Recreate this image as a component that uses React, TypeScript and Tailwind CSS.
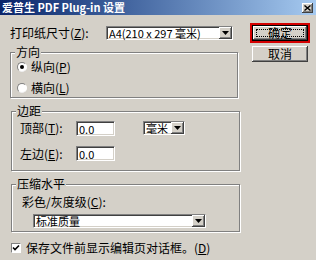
import React from "react";

const font = { fontFamily: '"Noto Sans CJK SC", "Liberation Sans", sans-serif' };

// classic win2k bevels
const sunken =
  "bg-white border border-t-[#808080] border-l-[#808080] border-r-white border-b-white shadow-[inset_1px_1px_0_#404040,inset_-1px_-1px_0_#d4d0c8]";
const raised =
  "bg-[#d4d0c8] shadow-[inset_-1px_-1px_0_#404040,inset_1px_1px_0_#fff,inset_-2px_-2px_0_#808080,inset_2px_2px_0_#d4d0c8]";

function Arrow() {
  return (
    <div className={`w-[13px] h-full flex items-center justify-center ${raised}`}>
      <svg width="7" height="4" viewBox="0 0 7 4">
        <path d="M0 0h7L3.5 4z" fill="#000" />
      </svg>
    </div>
  );
}

function Combo({ text, className }: { text: string; className: string }) {
  return (
    <div className={`flex items-stretch shrink-0 ${sunken} ${className}`}>
      <span className="flex-1 pl-[2px] text-[11px] leading-[12px] flex items-center whitespace-nowrap">{text}</span>
      <Arrow />
    </div>
  );
}

function Group({ label, className, children }: { label: string; className: string; children: React.ReactNode }) {
  return (
    <div className={`relative border border-[#808080] shadow-[1px_1px_0_#fff,inset_1px_1px_0_#fff] ${className}`}>
      <span className="absolute left-[4px] top-[-8px] px-[1px] bg-[#d4d0c8] text-[12px] leading-[14px]">{label}</span>
      {children}
    </div>
  );
}

function Radio({ checked, label, k }: { checked?: boolean; label: string; k: string }) {
  return (
    <div className="flex items-center h-[14px]">
      <div className="w-[10px] h-[10px] rounded-full bg-white border border-t-[#808080] border-l-[#808080] border-r-white border-b-[#eee] ml-[6px] mr-[4px] flex items-center justify-center">
        {checked && <div className="w-[4px] h-[4px] rounded-full bg-black" />}
      </div>
      <span className="text-[12px] leading-[14px]">
        {label}(<u>{k}</u>)
      </span>
    </div>
  );
}

export default function App() {
  return (
    <div className="w-[316px] h-[260px] bg-[#d4d0c8] text-black overflow-hidden flex flex-col" style={font}>
      {/* title bar */}
      <div className="h-[15px] flex items-center bg-gradient-to-r from-[#0a246a] to-[#a6caf0] pl-[2px] pr-[3px]">
        <span className="text-white font-bold text-[11px] leading-[15px]">爱普生 PDF Plug-in 设置</span>
        <div className={`ml-auto w-[11px] h-[10px] flex items-center justify-center ${raised}`}>
          <svg width="7" height="6" viewBox="0 0 7 6">
            <path d="M0.5 0.5l6 5M6.5 0.5l-6 5" stroke="#000" strokeWidth="1.4" />
          </svg>
        </div>
      </div>

      <div className="flex">
        {/* left column */}
        <div className="flex flex-col w-[240px] pl-[10px]">
          <div className="flex items-center mt-[11px] h-[14px]">
            <span className="text-[12px] leading-[14px] w-[96px] shrink-0">
              打印纸尺寸(<u>Z</u>):
            </span>
            <Combo text="A4(210 x 297 毫米)" className="w-[127px] h-[14px]" />
          </div>

          <Group label="方向" className="mt-[12px] w-[228px] h-[46px] pt-[7px] flex flex-col gap-[7px]">
            <Radio checked label="纵向" k="P" />
            <Radio label="横向" k="L" />
          </Group>

          <Group label="边距" className="mt-[13px] ml-[1px] w-[229px] h-[60px] pt-[9px] pl-[8px] flex flex-col gap-[11px]">
            <div className="flex items-center h-[14px]">
              <span className="text-[12px] leading-[14px] w-[56px] shrink-0">
                顶部(<u>T</u>):
              </span>
              <div className={`w-[39px] h-[15px] shrink-0 text-[11px] leading-[12px] pl-[2px] pt-[1px] ${sunken}`}>0.0</div>
              <div className="w-[28px] shrink-0" />
              <Combo text="毫米" className="w-[42px] h-[14px]" />
            </div>
            <div className="flex items-center h-[15px]">
              <span className="text-[12px] leading-[14px] w-[56px] shrink-0">
                左边(<u>E</u>):
              </span>
              <div className={`w-[39px] h-[15px] shrink-0 text-[11px] leading-[12px] pl-[2px] pt-[1px] ${sunken}`}>0.0</div>
            </div>
          </Group>

          <Group label="压缩水平" className="mt-[13px] ml-[1px] w-[229px] h-[48px] pt-[10px] pl-[10px] flex flex-col">
            <span className="text-[12px] leading-[14px]">
              彩色/灰度级(<u>C</u>):
            </span>
            <Combo text="标准质量" className="mt-[5px] ml-[11px] w-[173px] h-[14px]" />
          </Group>

          <div className="flex items-center mt-[9px] h-[14px]">
            <div className="w-[10px] h-[10px] bg-white border border-t-[#808080] border-l-[#808080] border-r-white border-b-white ml-[1px] mr-[5px] flex items-center justify-center">
              <svg width="8" height="8" viewBox="0 0 8 8">
                <path d="M1 3.5l2 2L7 1.5" stroke="#000" strokeWidth="1.6" fill="none" />
              </svg>
            </div>
            <span className="text-[12px] leading-[14px]">
              保存文件前显示编辑页对话框。(<u>D</u>)
            </span>
          </div>
        </div>

        {/* right column: buttons */}
        <div className="flex flex-col ml-[10px] mt-[8px]">
          <div className="border-2 border-[#d40000] w-[60px] h-[20px]">
            <div className="w-full h-full border border-black">
              <div className={`w-full h-full flex items-center justify-center p-[3px] ${raised}`}>
                <div className="w-full h-full border border-dotted border-black flex items-center justify-center text-[12px] leading-[12px]">
                  确定
                </div>
              </div>
            </div>
          </div>
          <div className={`mt-[3px] ml-[2px] w-[56px] h-[16px] flex items-center justify-center text-[12px] leading-[14px] ${raised}`}>
            取消
          </div>
        </div>
      </div>
    </div>
  );
}
